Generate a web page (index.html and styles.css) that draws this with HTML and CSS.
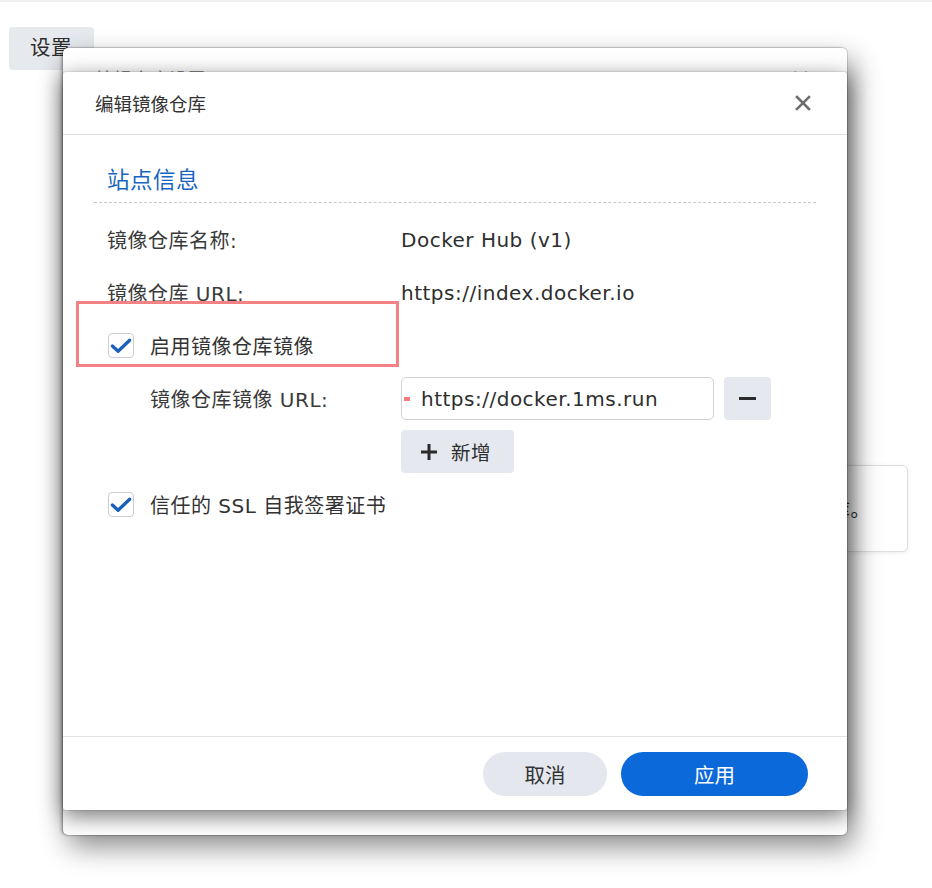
FILE: index.html
```html
<!DOCTYPE html>
<html lang="zh-CN">
<head>
<meta charset="utf-8">
<title>编辑镜像仓库</title>
<link rel="stylesheet" href="styles.css">
</head>
<body>
<div class="desktop">
  <div class="topline"></div>
  <div class="tab">设置</div>
  <div class="side-box"><span class="side-text">建议启用镜像仓库。</span></div>

  <div class="dialog-back">
    <div class="back-header">
      <span class="back-title">编辑仓库设置</span>
      <span class="back-close">×</span>
    </div>
  </div>

  <div class="dialog">
    <div class="dlg-header">
      <span class="dlg-title">编辑镜像仓库</span>
      <svg class="close" width="16" height="16" viewBox="0 0 16 16"><path d="M2 2 L14 14 M14 2 L2 14" stroke="#6f6f6f" stroke-width="2.6" stroke-linecap="square" fill="none"/></svg>
    </div>
    <div class="dlg-body">
      <div class="section-title">站点信息</div>
      <div class="rows">
        <div class="row">
          <span class="label">镜像仓库名称:</span>
          <span class="value">Docker Hub (v1)</span>
        </div>
        <div class="row">
          <span class="label">镜像仓库 URL:</span>
          <span class="value">https://index.docker.io</span>
        </div>
        <div class="row check-row">
          <span class="checkbox"><svg width="25" height="25" viewBox="0 0 25 25"><path d="M3.5 13 L9.5 18.5 L21.5 7" stroke="#1b5fbd" stroke-width="3.4" stroke-linecap="round" stroke-linejoin="round" fill="none"/></svg></span>
          <span class="check-label">启用镜像仓库镜像</span>
        </div>
        <div class="row">
          <span class="label label-indent">镜像仓库镜像 URL:</span>
          <div class="input">
            <span class="req"></span>
            <span class="input-text">https://docker.1ms.run</span>
          </div>
          <button class="btn-icon" type="button"><span class="minus"></span></button>
        </div>
        <div class="row add-row">
          <button class="btn-add" type="button">
            <svg width="18" height="18" viewBox="0 0 18 18"><path d="M9 1 V17 M1 9 H17" stroke="#2b2b2b" stroke-width="3" fill="none"/></svg>
            <span>新增</span>
          </button>
        </div>
        <div class="row check-row">
          <span class="checkbox"><svg width="25" height="25" viewBox="0 0 25 25"><path d="M3.5 13 L9.5 18.5 L21.5 7" stroke="#1b5fbd" stroke-width="3.4" stroke-linecap="round" stroke-linejoin="round" fill="none"/></svg></span>
          <span class="check-label">信任的 SSL 自我签署证书</span>
        </div>
      </div>
    </div>
    <div class="dlg-footer">
      <button class="btn btn-cancel" type="button">取消</button>
      <button class="btn btn-apply" type="button">应用</button>
    </div>
  </div>

  <div class="highlight"></div>
</div>
</body>
</html>
```

FILE: styles.css
```css
* { box-sizing: border-box; }

html, body {
  margin: 0;
  padding: 0;
  background: #ffffff;
}

body {
  font-family: "DejaVu Sans", "Noto Sans CJK SC", sans-serif;
  color: #333333;
  font-size: 20px;
  letter-spacing: 0.5px;
}

.desktop {
  position: relative;
  width: 932px;
  height: 888px;
  overflow: hidden;
  background: #ffffff;
}

.topline {
  height: 2px;
  background: #f0f0f0;
}

.tab {
  position: absolute;
  left: 9px;
  top: 27px;
  width: 85px;
  height: 43px;
  background: #e6e9ee;
  border-radius: 4px;
  padding: 7px 0 0 21px;
  font-size: 20.5px;
  line-height: 28px;
  color: #2e2e2e;
}

.side-box {
  position: absolute;
  left: 560px;
  top: 465px;
  width: 348px;
  height: 87px;
  background: #ffffff;
  border: 1px solid #dedede;
  border-radius: 6px;
  box-shadow: 0 1px 4px rgba(0, 0, 0, 0.08);
  display: flex;
  align-items: center;
  justify-content: flex-end;
  padding-right: 37px;
  white-space: nowrap;
}

.side-text {
  font-size: 19px;
  color: #2a2a2a;
}

.dialog-back {
  position: absolute;
  left: 63px;
  top: 48px;
  width: 784px;
  height: 787px;
  background: #ffffff;
  border-radius: 5px;
  box-shadow: 0 0 0 1px rgba(0, 0, 0, 0.12), -2px 0 3px rgba(0, 0, 0, 0.25), 6px 12px 28px rgba(0, 0, 0, 0.45);
}

.back-header {
  height: 60px;
  display: flex;
  align-items: center;
  justify-content: space-between;
  padding: 0 36px 0 32px;
  color: #8a8a8a;
  font-size: 18px;
}

.back-close {
  font-size: 24px;
}

.dialog {
  position: absolute;
  left: 63px;
  top: 72px;
  width: 784px;
  height: 738px;
  background: #ffffff;
  border-radius: 3px;
  display: flex;
  flex-direction: column;
  box-shadow: 0 0 0 1px rgba(0, 0, 0, 0.08), 0 6px 22px rgba(0, 0, 0, 0.55);
}

.dlg-header {
  height: 63px;
  flex: none;
  border-bottom: 1px solid #e2e2e2;
  display: flex;
  align-items: center;
  justify-content: space-between;
  padding: 0 36px 0 32px;
}

.dlg-title {
  font-size: 18.5px;
  color: #333333;
  letter-spacing: 0;
}

.close {
  display: block;
}

.dlg-body {
  flex: 1;
  padding: 0 31px;
}

.section-title {
  padding: 30px 13px 7px;
  font-size: 22.5px;
  line-height: 30px;
  color: #1966c0;
  border-bottom: 1px dashed #c8c8c8;
}

.rows {
  margin-top: 15px;
  display: flex;
  flex-direction: column;
  gap: 10px;
}

.row {
  height: 43px;
  display: flex;
  align-items: center;
  white-space: nowrap;
}

.label {
  width: 307px;
  flex: none;
  padding-left: 13px;
  color: #3a3a3a;
}

.label-indent {
  padding-left: 56px;
}

.value {
  color: #2e2e2e;
}

.check-row {
  padding-left: 14px;
}

.checkbox {
  width: 26px;
  height: 25px;
  flex: none;
  border: 1px solid #c9cdd3;
  border-radius: 4px;
  background: #ffffff;
  display: flex;
  align-items: center;
  justify-content: center;
}

.checkbox svg {
  display: block;
}

.check-label {
  margin-left: 16px;
  color: #333333;
}

.input {
  width: 313px;
  height: 43px;
  border: 1px solid #cfd3d8;
  border-radius: 5px;
  display: flex;
  align-items: center;
  padding-left: 2px;
}

.req {
  width: 6px;
  height: 4px;
  background: #f77b7b;
  margin-right: 11px;
}

.input-text {
  color: #2e2e2e;
}

.btn-icon {
  margin-left: 10px;
  width: 47px;
  height: 43px;
  border: none;
  border-radius: 4px;
  background: #e5e9ef;
  display: flex;
  align-items: center;
  justify-content: center;
  padding: 0;
}

.minus {
  width: 17px;
  height: 3px;
  background: #2b2b2b;
}

.add-row {
  padding-left: 307px;
}

.btn-add {
  width: 113px;
  height: 43px;
  border: none;
  border-radius: 4px;
  background: #e5e9ef;
  display: flex;
  align-items: center;
  padding: 0 0 0 19px;
  gap: 13px;
  font-family: "DejaVu Sans", "Noto Sans CJK SC", sans-serif;
  font-size: 19.5px;
  letter-spacing: 0.5px;
  color: #2e2e2e;
}

.btn-add svg {
  display: block;
}

.dlg-footer {
  height: 74px;
  flex: none;
  border-top: 1px solid #e4e4e4;
  display: flex;
  justify-content: flex-end;
  align-items: center;
  gap: 14px;
  padding-right: 39px;
}

.btn {
  height: 44px;
  border: none;
  border-radius: 22px;
  font-family: "DejaVu Sans", "Noto Sans CJK SC", sans-serif;
  font-size: 20.5px;
  padding: 0;
}

.btn-cancel {
  width: 124px;
  background: #e4e8ee;
  color: #333333;
}

.btn-apply {
  width: 187px;
  background: #0b69d9;
  color: #ffffff;
}

.highlight {
  position: absolute;
  left: 76px;
  top: 301px;
  width: 323px;
  height: 66px;
  border: 3px solid #f48284;
}
```
